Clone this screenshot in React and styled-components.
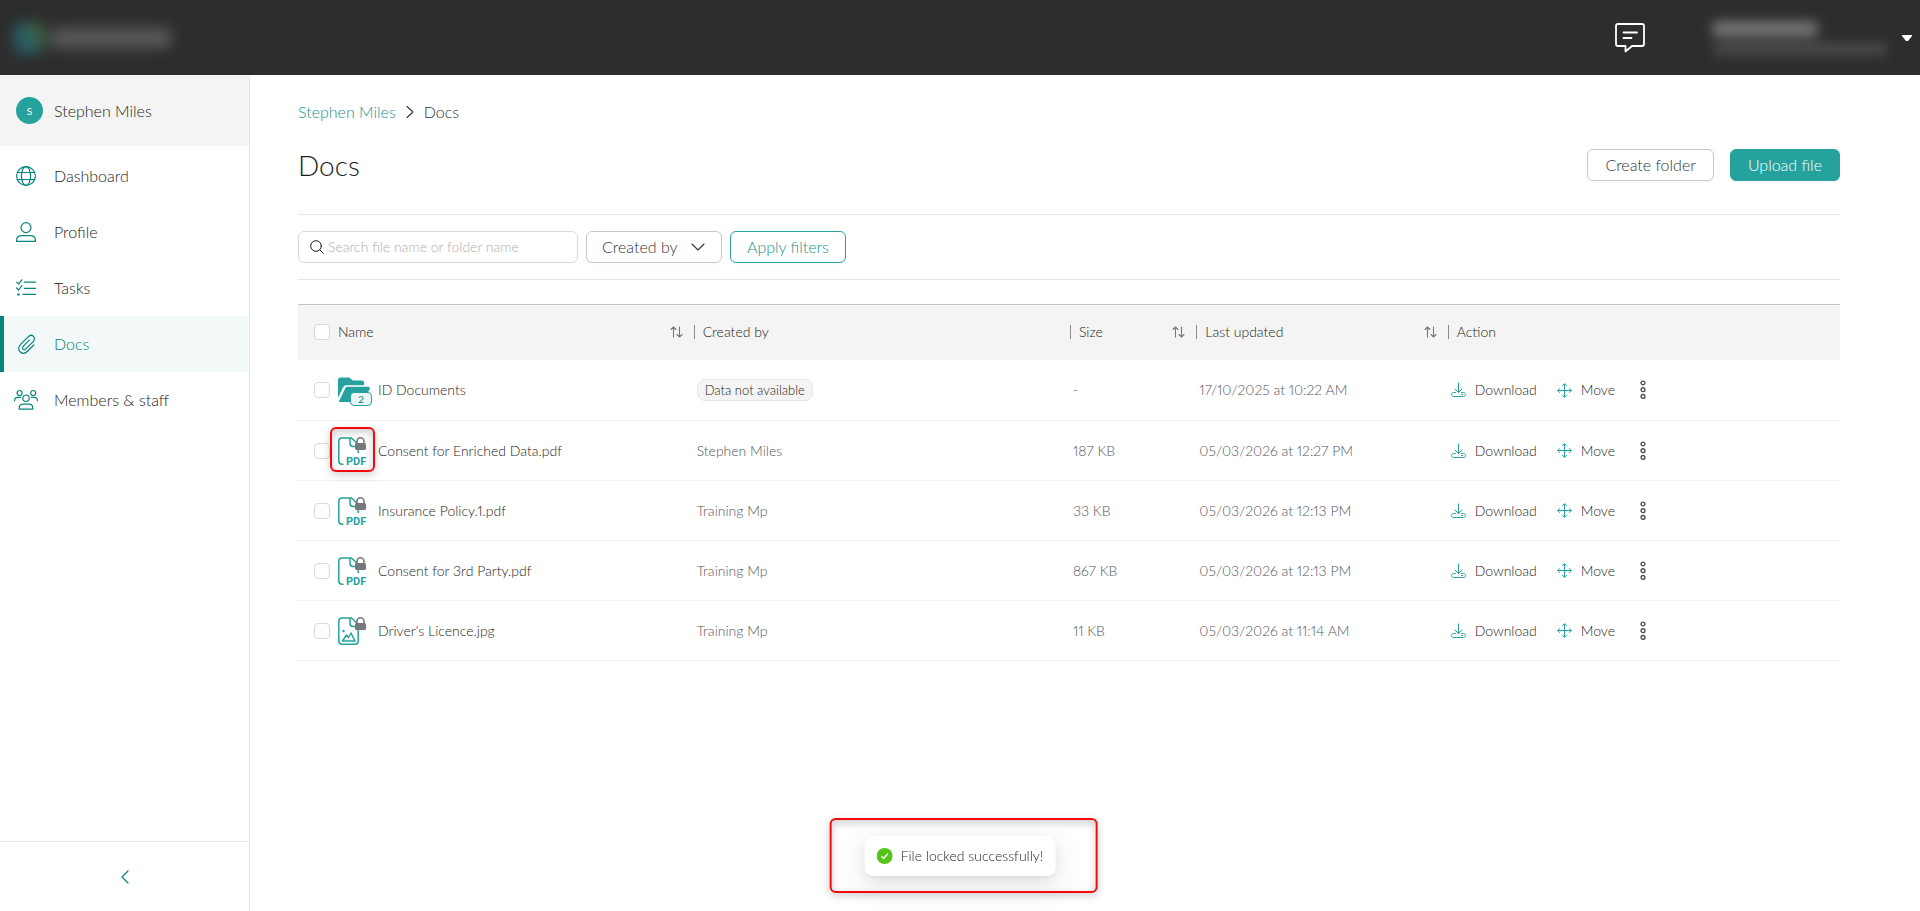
import React from "react";
import styled, { createGlobalStyle, css } from "styled-components";

const teal = "#26a29e";
const tealText = "#15928e";
const deepTeal = "#07857c";
const ink = "#1c1d20";
const softInk = "#333438";
const line = "#e6e6e6";

const GlobalStyle = createGlobalStyle`
  *, *::before, *::after { box-sizing: border-box; }
  body {
    margin: 0;
    background: #fff;
    color: ${ink};
    font-family: Lato, "Liberation Sans", sans-serif;
    font-size: 16px;
    font-weight: 300;
    font-variant-numeric: proportional-nums;
    line-height: 24px;
  }
  button, input, select { font: inherit; color: inherit; }
  a { color: inherit; text-decoration: none; }
`;

const Page = styled.div`
  min-height: 100vh;
  display: flex;
  flex-direction: column;
`;

const TopBar = styled.header`
  height: 75px;
  flex: none;
  background: #2d2d2d;
  display: flex;
  align-items: center;
  justify-content: space-between;
  padding: 0 8px;
`;

const Brand = styled.div`
  display: flex;
  align-items: center;
  gap: 6px;
  padding: 0 6px;
  filter: blur(7px);
`;

const BrandMark = styled.span`
  width: 30px;
  height: 30px;
  border-radius: 8px;
  background: linear-gradient(60deg, #2a6068 50%, #42693a 75%);
`;

const BrandName = styled.span`
  width: 122px;
  height: 20px;
  border-radius: 8px;
  background: #595959;
`;

const TopActions = styled.div`
  display: flex;
  align-items: center;
`;

const IconButton = styled.button`
  border: 0;
  padding: 0;
  background: none;
  display: flex;
  align-items: center;
  justify-content: center;
  cursor: pointer;
`;

const MessageButton = styled(IconButton)`
  color: #fff;
`;

const Account = styled.button`
  border: 0;
  padding: 0;
  margin-left: 66px;
  background: none;
  display: flex;
  align-items: center;
  gap: 14px;
  cursor: pointer;
`;

const AccountText = styled.span`
  display: flex;
  flex-direction: column;
  gap: 6px;
  width: 176px;
  filter: blur(6px);
`;

const AccountLine = styled.span`
  height: ${(p) => (p.$strong ? 16 : 12)}px;
  width: ${(p) => (p.$strong ? "60%" : "100%")};
  background: ${(p) => (p.$strong ? "#747474" : "#4e4a4e")};
  border-radius: 6px;
`;

const Body = styled.div`
  flex: 1;
  display: flex;
`;

const Sidebar = styled.aside`
  width: 250px;
  flex: none;
  border-right: 1px solid ${line};
  display: flex;
  flex-direction: column;
`;

const UserCard = styled.div`
  height: 71px;
  background: #f4f4f4;
  display: flex;
  align-items: center;
  gap: 11px;
  padding: 0 16px;
`;

const Avatar = styled.span`
  width: 27px;
  height: 27px;
  border-radius: 50%;
  background: ${teal};
  color: #fff;
  font-size: 10px;
  font-weight: 400;
  display: flex;
  align-items: center;
  justify-content: center;
`;

const Nav = styled.nav`
  flex: 1;
  padding-top: 2px;
`;

const NavItem = styled.a`
  height: 56px;
  display: flex;
  align-items: center;
  gap: 16px;
  padding-left: 10px;
  border-left: 4px solid transparent;
  svg { color: ${deepTeal}; flex: none; }
  ${(p) =>
    p.$active &&
    css`
      color: ${deepTeal};
      background: #f3f9f9;
      border-left-color: ${deepTeal};
    `}
`;

const Collapse = styled(IconButton)`
  height: 70px;
  border-top: 1px solid ${line};
  color: ${deepTeal};
`;

const Main = styled.main`
  flex: 1;
  min-width: 0;
  padding: 25px 80px 80px 48px;
`;

const Breadcrumb = styled.nav`
  display: flex;
  align-items: center;
  gap: 10px;
  color: ${softInk};
  a { color: ${tealText}; }
`;

const TitleRow = styled.div`
  display: flex;
  align-items: center;
  justify-content: space-between;
  height: 82px;
  border-bottom: 1px solid ${line};
  margin-top: 9px;
  padding-bottom: 18px;
`;

const Title = styled.h1`
  margin: 0;
  font-size: 28px;
  line-height: 36px;
  font-weight: 300;
`;

const ButtonGroup = styled.div`
  display: flex;
  gap: 16px;
`;

const Button = styled.button`
  height: 32px;
  padding: 0 ${(p) => (p.$tone === "outline" ? 16 : 17)}px;
  border-radius: 6px;
  border: 1px solid #c8c8cb;
  background: #fff;
  color: ${softInk};
  line-height: 22px;
  cursor: pointer;
  white-space: nowrap;
  box-shadow: 0 2px 0 rgba(0, 0, 0, 0.02);
  ${(p) => p.$tone === "solid" && css`background: ${teal}; border-color: ${teal}; color: #fff;`}
  ${(p) => p.$tone === "outline" && css`border-color: ${teal}; color: ${tealText};`}
`;

const Filters = styled.div`
  display: flex;
  align-items: center;
  gap: 8px;
  padding: 16px 0;
  border-bottom: 1px solid ${line};
  margin-bottom: 24px;
`;

const SearchBox = styled.label`
  width: 280px;
  height: 32px;
  border: 1px solid #d9d9d9;
  border-radius: 6px;
  display: flex;
  align-items: center;
  gap: 4px;
  padding: 0 11px;
  input {
    border: 0;
    outline: 0;
    padding: 0;
    min-width: 0;
    flex: 1;
    background: none;
    font-size: 14px;
  }
  input::placeholder { color: #adadad; opacity: 1; }
`;

const SelectBox = styled.span`
  position: relative;
  display: flex;
  align-items: center;
  color: ${softInk};
  svg { position: absolute; right: 17px; pointer-events: none; }
  select {
    appearance: none;
    width: 136px;
    height: 32px;
    padding: 0 32px 0 15px;
    border: 1px solid #c8c8cb;
    border-radius: 6px;
    background: #fff;
    box-shadow: 0 2px 0 rgba(0, 0, 0, 0.02);
  }
`;

const Table = styled.table`
  width: 100%;
  table-layout: fixed;
  border-collapse: separate;
  border-spacing: 0;
  font-size: 14px;
  line-height: 22px;
`;

const Col = styled.col`
  width: ${(p) => p.$w}%;
`;

const Th = styled.th`
  height: 56px;
  padding: 0 4px 2px;
  background: #f4f4f4;
  border-top: 1px solid #c4c4c6;
  font-weight: 300;
  text-align: left;
  &:first-child { padding-left: 16px; }
`;

const HeadCell = styled.div`
  display: flex;
  align-items: center;
  gap: 8px;
`;

const HeadLabel = styled.span`
  flex: 1;
`;

const Divider = styled.span`
  width: 1px;
  height: 14px;
  background: #8c8d92;
`;

const SortButton = styled(IconButton)`
  color: #77787d;
  margin-right: 3px;
`;

const Td = styled.td`
  height: 60px;
  padding: 0 7px;
  border-bottom: 1px solid #f0f0f0;
  color: #55565b;
  tr:first-child > & { height: 61px; }
  &:first-child { padding-left: 16px; color: ${ink}; }
`;

const NameCell = styled.div`
  display: flex;
  align-items: center;
  gap: 8px;
`;

const Checkbox = styled.input.attrs({ type: "checkbox" })`
  appearance: none;
  width: 16px;
  height: 16px;
  margin: 0;
  flex: none;
  border: 1px solid #d9d9d9;
  border-radius: 4px;
  background: #fff;
`;

const FileIconBox = styled.span`
  position: relative;
  width: 32px;
  height: 32px;
  flex: none;
  display: flex;
  align-items: center;
`;

const Count = styled.span`
  position: absolute;
  left: 12px;
  bottom: 0;
  width: 22px;
  height: 14px;
  border: 1px solid ${teal};
  border-radius: 4px;
  background: #e9f6f5;
  color: ${deepTeal};
  font-size: 10px;
  font-weight: 400;
  line-height: 12px;
  text-align: center;
`;

const Callout = styled.span`
  position: absolute;
  inset: ${(p) => p.$inset};
  border: 2px solid #f5090d;
  border-radius: 6px;
  pointer-events: none;
  box-shadow: 0 3px 8px rgba(0, 0, 0, 0.18), inset 0 3px 8px rgba(0, 0, 0, 0.2);
`;

const Tag = styled.span`
  display: inline-block;
  padding: 0 7px;
  border: 1px solid #e6e6e6;
  border-radius: 8px;
  background: #f4f4f4;
  color: ${ink};
  font-size: 13px;
  line-height: 20px;
`;

const Actions = styled.div`
  display: flex;
  align-items: center;
  color: ${ink};
`;

const ActionButton = styled(IconButton)`
  gap: 9px;
  margin-right: 20px;
  svg { color: ${teal}; }
`;

const MoreButton = styled(IconButton)`
  width: 16px;
  height: 24px;
  color: #4b4c50;
`;

const Toast = styled.div`
  position: fixed;
  left: 50%;
  bottom: 35px;
  transform: translateX(-50%);
  display: flex;
  align-items: center;
  gap: 8px;
  padding: 9px 12px;
  border-radius: 8px;
  background: #fff;
  color: ${ink};
  font-size: 14px;
  line-height: 22px;
  white-space: nowrap;
  box-shadow: 0 6px 16px rgba(0, 0, 0, 0.08), 0 3px 6px -4px rgba(0, 0, 0, 0.12),
    0 9px 28px 8px rgba(0, 0, 0, 0.05);
`;

const Svg = ({ w, h = w, box, sw = 1.2, children }) => (
  <svg width={w} height={h} viewBox={box || `0 0 ${w} ${h}`} fill="none" stroke="currentColor"
    strokeWidth={sw} strokeLinecap="round" strokeLinejoin="round" aria-hidden="true">
    {children}
  </svg>
);

const GlobeIcon = () => (
  <Svg w={24}>
    <circle cx="12" cy="12" r="9.4" />
    <ellipse cx="12" cy="12" rx="4.6" ry="9.4" />
    <path d="M3.4 8.5h17.2M3.4 15.5h17.2" />
  </Svg>
);
const UserIcon = () => (
  <Svg w={24}>
    <circle cx="12" cy="7.6" r="5" />
    <path d="M2.6 21.4v-1.2c0-3.1 2.5-4.6 5.4-4.6h8c2.9 0 5.4 1.5 5.4 4.6v1.2z" />
  </Svg>
);
const TasksIcon = () => (
  <Svg w={24}>
    <path d="M2.6 6.2l2 2 3.2-4.4M2.6 12l2 2 3.2-4.4M10.4 6.2h11.2M10.4 12.3h11.2M9 18.4h12.6" />
    <path d="M4 18.4h1" strokeWidth="2" />
  </Svg>
);
const ClipIcon = () => (
  <Svg w={24}>
    <path d="M19.8 13l-6 6c-2.5 2.5-5.5 2.8-7.5 1-2.3-2.1-2.1-5.3.3-7.7l7.2-7.2c2-2 4.2-2.3 5.7-.8s1.2 3.8-.6 5.6l-6.7 6.8c-1.1 1.1-2.4 1.3-3.2.5s-.6-2.1.4-3.1l5.8-5.9" />
  </Svg>
);
const MembersIcon = () => (
  <Svg w={24}>
    <circle cx="5.6" cy="5" r="2.5" />
    <circle cx="19.2" cy="5" r="2.5" />
    <circle cx="12" cy="10.2" r="3.2" />
    <path d="M5.2 21.2v-1c0-2.7 1.8-4 4-4h5.6c2.2 0 4 1.3 4 4v1zM.6 12.8c0-2.3 1.4-3.4 3.2-3.4h2.8M23.4 12.8c0-2.3-1.4-3.4-3.2-3.4h-2.8" />
  </Svg>
);
const MessageIcon = () => (
  <Svg w={32} sw={1.8}>
    <path d="M4 2h24c1.2 0 2 .8 2 2v18c0 1.2-.8 2-2 2H18l-6.500 5.500V24H4c-1.200 0-2-.8-2-2V4c0-1.200.8-2 2-2zM9.500 10.500h13.500M9.500 16h8" />
  </Svg>
);
const SearchIcon = () => (
  <Svg w={14} sw={1}>
    <circle cx="6" cy="6" r="5.300" />
    <path d="M9.800 9.800l3.600 3.700" />
  </Svg>
);
const SortIcon = () => (
  <Svg w={13} h={12} sw={1.1}>
    <path d="M3.500 11V1M1 3.500L3.500 1 6 3.500M9.500 1v10M7 8.500L9.500 11 12 8.500" />
  </Svg>
);
const DownloadIcon = () => (
  <Svg w={15} h={16} sw={1}>
    <path d="M7.500 1v9.500M4 7l3.500 3.500L11 7M4.500 10.500H2.500c-1.200 0-2 .8-2 2s.8 2 2 2h10c1.200 0 2-.8 2-2s-.8-2-2-2h-2" />
    <path d="M10.500 12.500h1.200" />
  </Svg>
);
const MoveIcon = () => (
  <Svg w={15} sw={1}>
    <path d="M7.500 1v13M1 7.500h13M5.500 2.700l2-2 2 2M5.500 12.300l2 2 2-2M2.700 5.500l-2 2 2 2M12.300 5.500l2 2-2 2" />
  </Svg>
);
const MoreIcon = () => (
  <Svg w={6} h={20} sw={1.4}>
    <circle cx="3" cy="3" r="1.9" />
    <circle cx="3" cy="9.700" r="1.9" />
    <circle cx="3" cy="16.400" r="1.9" />
  </Svg>
);
const CheckIcon = () => (
  <svg width="16" height="16" viewBox="0 0 16 16" aria-hidden="true">
    <circle cx="8" cy="8" r="8" fill="#52c41a" />
    <path d="M4.800 8.200l2.200 2.300 4.200-4.800" fill="none" stroke="#fff" strokeWidth="1.300" />
  </svg>
);

const Lock = () => (
  <g>
    <path d="M19 9V6.300a3.500 3.500 0 0 1 7 0V9" stroke="#77787d" strokeWidth="1.600" fill="none" />
    <rect x="17" y="8" width="11" height="7" rx="1.500" fill="#77787d" stroke="none" />
  </g>
);
const PdfIcon = () => (
  <svg width="30" height="32" viewBox="0 0 30 32" fill="none" stroke={teal} strokeWidth="1.500" aria-hidden="true">
    <path d="M5.500 29.300H4c-1.800 0-3.200-1-3.200-3.200V6.100C.8 3.900 2 3 4 3h9.500l6.700 6.500V18M12 3.300v5c0 2 .8 3.200 3 3.200h5" />
    <Lock />
    <text x="8" y="30" fontFamily="Roboto, sans-serif" fontSize="11" fontWeight="700" fill={teal} stroke="none">PDF</text>
  </svg>
);
const ImageIcon = () => (
  <svg width="30" height="32" viewBox="0 0 30 32" fill="none" stroke={teal} strokeWidth="1.500" strokeLinejoin="round" aria-hidden="true">
    <path d="M20.200 10.500v15.600c0 2-1 3.200-3.200 3.200H4c-2.200 0-3.200-1.200-3.200-3.200v-20C.8 4 2 3 4 3h9.500l6.700 6.500M12 3.300v5c0 2 .8 3.200 3 3.200h5" />
    <path d="M4.500 26l4-6 2 2.500 2.500-4.500 4 8z" />
    <circle cx="5.500" cy="16" r="1.200" fill={teal} stroke="none" />
    <Lock />
  </svg>
);
const FolderIcon = () => (
  <svg width="32" height="32" viewBox="0 0 32 32" fill={teal} aria-hidden="true">
    <path d="M0 24V6c0-1.600 1.200-2.600 2.600-2.600h8.600l3.600 3.200h9c1.500 0 2.400 1 2.400 2.600v2H8.500c-1.600 0-2.600.6-3.400 2z" />
    <path d="M.6 28L7.400 14c.4-.8 1-1.300 2-1.300h20.400c1.700 0 2.500 1.200 1.800 2.600l-6 11.400c-.4.700-1 1.300-1.800 1.300z" />
  </svg>
);

const ICONS = { folder: FolderIcon, pdf: PdfIcon, image: ImageIcon };

const NAV = [
  ["Dashboard", GlobeIcon],
  ["Profile", UserIcon],
  ["Tasks", TasksIcon],
  ["Docs", ClipIcon],
  ["Members & staff", MembersIcon],
];

const COLUMNS = [
  { label: "Name", width: 25.4, sort: true },
  { label: "Created by", width: 24.4 },
  { label: "Size", width: 8.2, sort: true },
  { label: "Last updated", width: 16.3, sort: true },
  { label: "Action", width: 25.7 },
];

const FILES = [
  { name: "ID Documents", icon: "folder", count: 2, size: "-", updated: "17/10/2025 at 10:22 AM" },
  { name: "Consent for Enriched Data.pdf", icon: "pdf", by: "Stephen Miles", size: "187 KB", updated: "05/03/2026 at 12:27 PM", marked: true },
  { name: "Insurance Policy.1.pdf", icon: "pdf", by: "Training Mp", size: "33 KB", updated: "05/03/2026 at 12:13 PM" },
  { name: "Consent for 3rd Party.pdf", icon: "pdf", by: "Training Mp", size: "867 KB", updated: "05/03/2026 at 12:13 PM" },
  { name: "Driver's Licence.jpg", icon: "image", by: "Training Mp", size: "11 KB", updated: "05/03/2026 at 11:14 AM" },
];

function FileRow({ file }) {
  const Icon = ICONS[file.icon];
  return (
    <tr>
      <Td>
        <NameCell>
          <Checkbox aria-label={`Select ${file.name}`} />
          <FileIconBox>
            <Icon />
            {file.count && <Count>{file.count}</Count>}
            {file.marked && <Callout $inset="-8px -5px -5px -8px" />}
          </FileIconBox>
          {file.name}
        </NameCell>
      </Td>
      <Td>{file.by || <Tag>Data not available</Tag>}</Td>
      <Td>{file.size}</Td>
      <Td>{file.updated}</Td>
      <Td>
        <Actions>
          <ActionButton><DownloadIcon />Download</ActionButton>
          <ActionButton><MoveIcon />Move</ActionButton>
          <MoreButton aria-label="More actions"><MoreIcon /></MoreButton>
        </Actions>
      </Td>
    </tr>
  );
}

export default function App() {
  return (
    <Page>
      <GlobalStyle />
      <TopBar>
        <Brand><BrandMark /><BrandName /></Brand>
        <TopActions>
          <MessageButton aria-label="Messages"><MessageIcon /></MessageButton>
          <Account aria-label="Account menu">
            <AccountText><AccountLine $strong /><AccountLine /></AccountText>
            <svg width="10" height="6" viewBox="0 0 10 6" fill="#fff" aria-hidden="true"><path d="M0 0h10v1L6 6H4L0 1z" /></svg>
          </Account>
        </TopActions>
      </TopBar>
      <Body>
        <Sidebar>
          <UserCard><Avatar>S</Avatar>Stephen Miles</UserCard>
          <Nav aria-label="Main">
            {NAV.map(([label, Icon]) => (
              <NavItem key={label} href="#" $active={label === "Docs"}><Icon />{label}</NavItem>
            ))}
          </Nav>
          <Collapse aria-label="Collapse sidebar">
            <Svg w={8} h={14}><path d="M7 1L1 7l6 6" /></Svg>
          </Collapse>
        </Sidebar>
        <Main>
          <Breadcrumb aria-label="Breadcrumb">
            <a href="#">Stephen Miles</a>
            <Svg w={8} h={14} sw={1.1}><path d="M1 1.500L7 7l-6 5.500" /></Svg>
            <span>Docs</span>
          </Breadcrumb>
          <TitleRow>
            <Title>Docs</Title>
            <ButtonGroup>
              <Button>Create folder</Button>
              <Button $tone="solid">Upload file</Button>
            </ButtonGroup>
          </TitleRow>
          <Filters>
            <SearchBox>
              <SearchIcon />
              <input type="text" aria-label="Search" placeholder="Search file name or folder name" />
            </SearchBox>
            <SelectBox>
              <select aria-label="Created by"><option>Created by</option></select>
              <Svg w={14} h={8} sw={1.1}><path d="M1 1l6 6 6-6" /></Svg>
            </SelectBox>
            <Button $tone="outline">Apply filters</Button>
          </Filters>
          <Table>
            <colgroup>{COLUMNS.map((c) => <Col key={c.label} $w={c.width} />)}</colgroup>
            <thead>
              <tr>
                {COLUMNS.map((c, i) => (
                  <Th key={c.label} scope="col">
                    <HeadCell>
                      {i === 0 ? <Checkbox aria-label="Select all files" /> : <Divider />}
                      <HeadLabel>{c.label}</HeadLabel>
                      {c.sort && <SortButton aria-label={`Sort by ${c.label}`}><SortIcon /></SortButton>}
                    </HeadCell>
                  </Th>
                ))}
              </tr>
            </thead>
            <tbody>{FILES.map((f) => <FileRow key={f.name} file={f} />)}</tbody>
          </Table>
        </Main>
      </Body>
      <Toast role="status">
        <CheckIcon />
        File locked successfully!
        <Callout $inset="-18px -42px -17px -35px" />
      </Toast>
    </Page>
  );
}
